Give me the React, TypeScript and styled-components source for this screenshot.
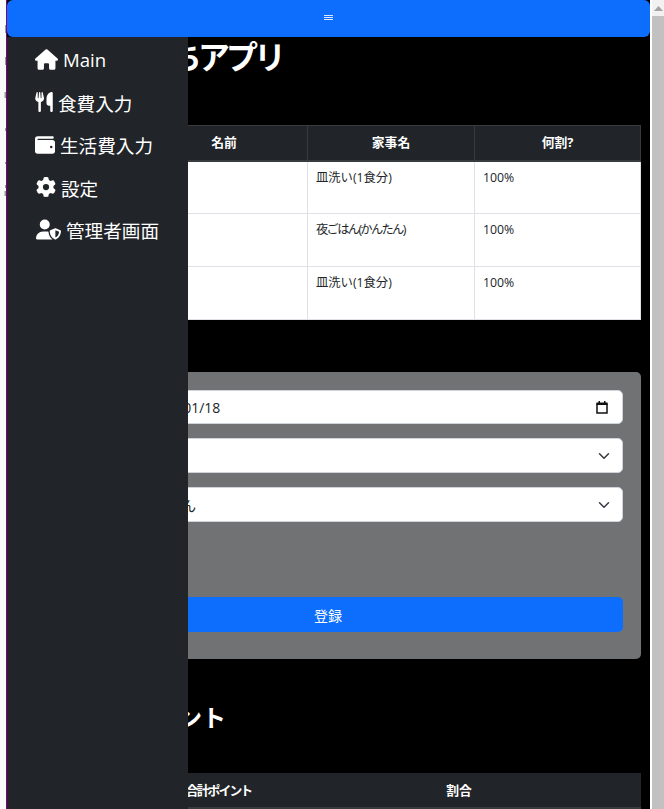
import React from 'react'
import styled, { createGlobalStyle } from 'styled-components'
import { FaHouse, FaUtensils, FaWallet, FaGear, FaUserShield } from 'react-icons/fa6'

const GlobalStyle = createGlobalStyle`
  html, body {
    margin: 0;
    height: 100%;
    overflow: hidden;
    background: #fafafa;
    font-family: "Open Sans", "Noto Sans CJK JP", sans-serif;
  }
  * { box-sizing: border-box; }
`

const Shell = styled.div`
  display: flex;
  height: 809px;
  width: 664px;
  overflow: hidden;
`

const LeftEdge = styled.div`
  width: 7px;
  flex: none;
  background: #fafafa;
  border-right: 1px solid #800080;
`

const Viewport = styled.div`
  position: relative;
  width: 643px;
  flex: none;
  background: #000;
  overflow: hidden;
`

const Navbar = styled.div`
  position: absolute;
  top: 0;
  left: 0;
  right: 0;
  z-index: 3;
  height: 37px;
  padding-bottom: 2px;
  background: #0d6efd;
  border-radius: 6px;
  display: flex;
  align-items: center;
  justify-content: center;
`

const Sidebar = styled.nav`
  position: absolute;
  top: 37px;
  left: 0;
  bottom: 0;
  z-index: 2;
  width: 181px;
  background: #212529;
  padding: 1.5px 0 0 28px;
`

const NavItem = styled.a`
  display: flex;
  align-items: center;
  gap: 5px;
  height: 42.5px;
  color: #fff;
  font-size: 18.6px;
  white-space: nowrap;
`

const NavIcon = styled.span<{ $width: number }>`
  width: ${({ $width }) => $width}px;
  flex: none;
  display: flex;
  justify-content: center;

  svg {
    flex: none;
  }
`

const Content = styled.main`
  padding: 37px 0 0 8px;
  color: #fff;
`

const Title = styled.h1`
  margin: 0;
  height: 88px;
  padding-left: 43px;
  font-size: 32px;
  line-height: 40px;
  font-weight: 700;
  letter-spacing: -4px;
`

const SectionTitle = styled.h2`
  margin: 0;
  height: 114px;
  padding: 43px 0 0 19px;
  font-size: 24px;
  line-height: 32px;
  font-weight: 700;
`

const Table = styled.table`
  width: 625px;
  table-layout: fixed;
  border-collapse: collapse;
  background: #fff;
  color: #212529;
  font-size: 12.3px;
`

const HeadCell = styled.th<{ $plain?: boolean; $tight?: boolean }>`
  height: 35px;
  padding: 0 8px 2px ${({ $tight }) => ($tight ? '22px' : '8px')};
  background: #212529;
  color: #fff;
  font-size: 12.8px;
  font-weight: 700;
  letter-spacing: ${({ $tight }) => ($tight ? '-1.9px' : '0')};
  white-space: nowrap;
  border: ${({ $plain }) => ($plain ? '0' : '1px solid #373b3e')};
  border-bottom: 2px solid #373b3e;
`

const Cell = styled.td<{ $kana?: boolean }>`
  height: 53px;
  padding: 7px 8px;
  vertical-align: top;
  line-height: 18px;
  letter-spacing: ${({ $kana }) => ($kana ? '-1.7px' : '0')};
  border: 1px solid #dee2e6;
`

const FormCard = styled.form`
  margin-top: 52px;
  width: 626px;
  height: 287px;
  padding: 18px;
  background: #717274;
  border-radius: 5px;
`

const FieldRow = styled.div<{ $date?: boolean }>`
  height: ${({ $date }) => ($date ? '34px' : '35px')};
  margin-bottom: 14px;
  padding: 0 12px 0 0;
  display: flex;
  align-items: center;
  background: #fff;
  color: #212529;
  font-size: 14px;
  border: 1px solid #ced4da;
  border-radius: 5px;
`

const FieldLabel = styled.span`
  width: 106px;
  flex: none;
  padding-left: 12px;
  color: #212529;
`

const FieldValue = styled.span<{ $date?: boolean }>`
  flex: 1;
  padding-left: ${({ $date }) => ($date ? '6px' : '0')};
`

const SubmitButton = styled.button`
  display: block;
  width: 100%;
  height: 35px;
  margin-top: 75px;
  border: 0;
  border-radius: 5px;
  background: #0d6efd;
  color: #fff;
  font: inherit;
  font-size: 14px;
`

const Scrollbar = styled.div`
  flex: 1;
  background: #f1f1f1;
  border-left: 2px solid #fff;
  display: flex;
  flex-direction: column;
`

const ScrollArrow = styled.div`
  height: 16px;
  display: flex;
  align-items: center;
  justify-content: center;
`

const ScrollThumb = styled.div`
  flex: 1;
  background: #c1c1c1;
`

const CalendarSvg = styled.svg`
  margin-right: 2px;
`

const MenuIcon = () => (
  <svg width="9" height="5" viewBox="0 0 9 5">
    <path d="M0 .5h9M0 2.5h9M0 4.5h9" stroke="#dbe8ff" strokeWidth="1" />
  </svg>
)

const CalendarIcon = () => (
  <CalendarSvg width="12" height="14" viewBox="0 0 12 14">
    <path d="M1 4h10v9H1z" fill="none" stroke="#111" strokeWidth="1.5" />
    <path d="M.5 2.5h11V5H.5zM2.5 1h1.5v2H2.5zM8 1h1.5v2H8z" fill="#111" />
  </CalendarSvg>
)

const SelectChevron = () => (
  <svg width="12" height="12" viewBox="0 0 16 16">
    <path d="M2 5l6 6 6-6" fill="none" stroke="#343a40" strokeWidth="2" strokeLinecap="round" strokeLinejoin="round" />
  </svg>
)

// remains of the page behind, clipped to the sliver left of the purple rule
const EdgeMarks = () => (
  <svg width="6" height="200" viewBox="0 0 6 200">
    <path
      d="M5 25h1v8H5zM5 57h1v8H5zM4.5 92H6v6H4.5zM5 128h1v3H5zM5 162h1v2H5zM5 185h1v3H5zM4.5 191H6v5H4.5z"
      fill="#9a9a9a"
    />
  </svg>
)

const menu = [
  { label: 'Main', width: 23, icon: <FaHouse size={23} /> },
  { label: '食費入力', width: 18, icon: <FaUtensils size={20} /> },
  { label: '生活費入力', width: 20, icon: <FaWallet size={20} /> },
  { label: '設定', width: 21, icon: <FaGear size={20} /> },
  { label: '管理者画面', width: 26, icon: <FaUserShield size={25} /> },
]

const chores = [
  ['2024/01/18 朝', '太郎', '皿洗い(1食分)', '100%'],
  ['2024/01/18 夜', '花子', '夜ごはん(かんたん)', '100%'],
  ['2024/01/17 夜', '太郎', '皿洗い(1食分)', '100%'],
]

const App: React.FC = () => (
  <>
    <GlobalStyle />
    <Shell>
      <LeftEdge>
        <EdgeMarks />
      </LeftEdge>
      <Viewport>
        <Navbar>
          <MenuIcon />
        </Navbar>
        <Sidebar>
          {menu.map((item) => (
            <NavItem key={item.label}>
              <NavIcon $width={item.width}>{item.icon}</NavIcon>
              {item.label}
            </NavItem>
          ))}
        </Sidebar>
        <Content>
          <Title>家事おうちアプリ</Title>
          <Table>
            <colgroup>
              <col width="125" />
              <col width="167" />
              <col width="167" />
              <col width="166" />
            </colgroup>
            <thead>
              <tr>
                <HeadCell>日付</HeadCell>
                <HeadCell>名前</HeadCell>
                <HeadCell>家事名</HeadCell>
                <HeadCell>何割?</HeadCell>
              </tr>
            </thead>
            <tbody>
              {chores.map((row, i) => (
                <tr key={i}>
                  {row.map((value, j) => (
                    <Cell key={j} $kana={value.includes('かんたん')}>
                      {value}
                    </Cell>
                  ))}
                </tr>
              ))}
            </tbody>
          </Table>
          <FormCard>
            <FieldRow $date>
              <FieldLabel>日付</FieldLabel>
              <FieldValue $date>2024/01/18</FieldValue>
              <CalendarIcon />
            </FieldRow>
            <FieldRow>
              <FieldLabel>名前</FieldLabel>
              <FieldValue>太郎</FieldValue>
              <SelectChevron />
            </FieldRow>
            <FieldRow>
              <FieldLabel>家事名</FieldLabel>
              <FieldValue>夜ごはん</FieldValue>
              <SelectChevron />
            </FieldRow>
            <SubmitButton type="button">登録</SubmitButton>
          </FormCard>
          <SectionTitle>月間合計ポイント</SectionTitle>
          <Table>
            <colgroup>
              <col width="130" />
              <col width="132" />
              <col width="363" />
            </colgroup>
            <thead>
              <tr>
                <HeadCell $plain>名前</HeadCell>
                <HeadCell $plain $tight>合計ポイント</HeadCell>
                <HeadCell $plain>割合</HeadCell>
              </tr>
            </thead>
            <tbody>
              <tr>
                <Cell />
                <Cell />
                <Cell />
              </tr>
            </tbody>
          </Table>
        </Content>
      </Viewport>
      <Scrollbar>
        <ScrollArrow>
          <svg width="9" height="5" viewBox="0 0 9 5">
            <path d="M4.5 0L9 5H0z" fill="#a3a3a3" />
          </svg>
        </ScrollArrow>
        <ScrollThumb />
      </Scrollbar>
    </Shell>
  </>
)

export default App
